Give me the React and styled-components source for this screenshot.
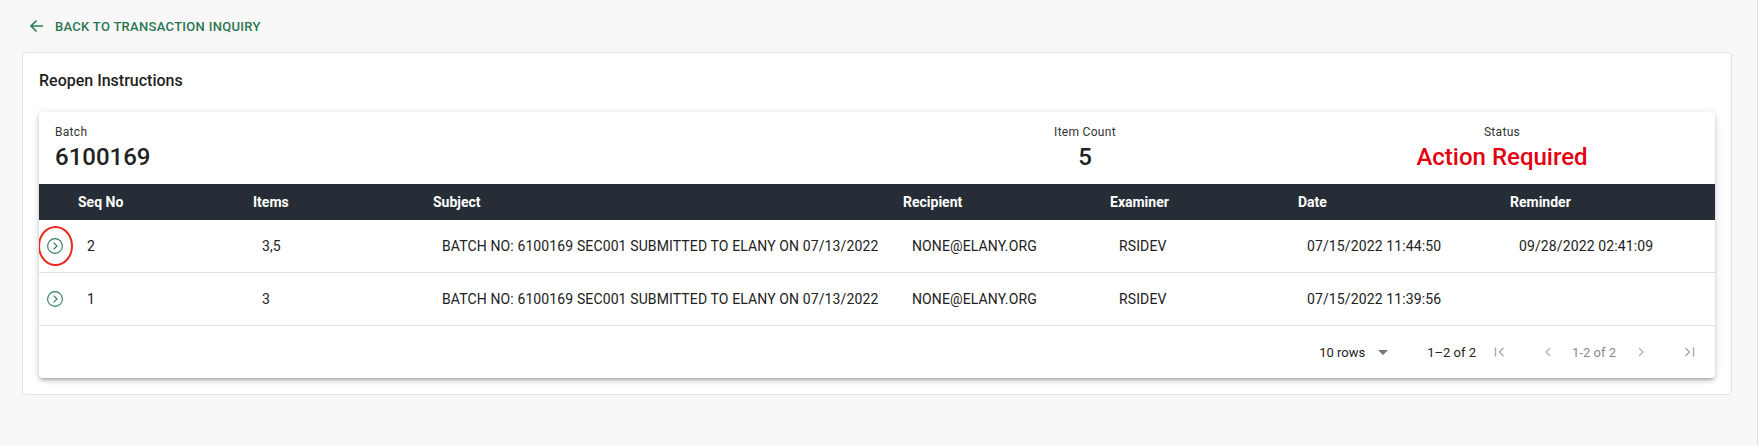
import React from 'react';
import styled, { createGlobalStyle } from 'styled-components';

const COLUMNS = '39px 175px 180px 470px 207px 188px 212px 1fr';

const rows = [
  {
    seq: '2',
    items: '3,5',
    subject: 'BATCH NO: 6100169 SEC001 SUBMITTED TO ELANY ON 07/13/2022',
    recipient: 'NONE@ELANY.ORG',
    examiner: 'RSIDEV',
    date: '07/15/2022 11:44:50',
    reminder: '09/28/2022 02:41:09',
    marked: true,
  },
  {
    seq: '1',
    items: '3',
    subject: 'BATCH NO: 6100169 SEC001 SUBMITTED TO ELANY ON 07/13/2022',
    recipient: 'NONE@ELANY.ORG',
    examiner: 'RSIDEV',
    date: '07/15/2022 11:39:56',
    reminder: '',
  },
];

const headers = ['Seq No', 'Items', 'Subject', 'Recipient', 'Examiner', 'Date', 'Reminder'];

const ArrowBack = () => (
  <svg width="15" height="14" viewBox="0 0 15 14" fill="none">
    <path d="M14 7H2M7.5 1.5L2 7l5.5 5.5" stroke="#2e7d57" strokeWidth="1.7" />
  </svg>
);

const OpenIcon = () => (
  <svg width="18" height="18" viewBox="0 0 18 18" fill="none">
    <circle cx="9" cy="9" r="7.4" stroke="#2e7d57" strokeWidth="1.1" />
    <path d="M7.6 5.6L11 9l-3.4 3.4" stroke="#2e7d57" strokeWidth="1.2" />
  </svg>
);

const PagerIcon = ({ d, color = '#b3b3b3' }) => (
  <svg width="12" height="12" viewBox="0 0 12 12" fill="none">
    <path d={d} stroke={color} strokeWidth="1.4" />
  </svg>
);

const App = () => (
  <>
    <GlobalStyle />
    <Page>
      <BackLink>
        <ArrowBack />
        Back to Transaction Inquiry
      </BackLink>
      <Card>
        <Title>Reopen Instructions</Title>
        <Paper>
          <Summary>
            <SummaryItem>
              <Label>Batch</Label>
              <Value>6100169</Value>
            </SummaryItem>
            <SummaryItem $center>
              <Label>Item Count</Label>
              <Value>5</Value>
            </SummaryItem>
            <SummaryItem $center>
              <Label>Status</Label>
              <Value $alert>Action Required</Value>
            </SummaryItem>
          </Summary>
          <HeadRow>
            <span />
            {headers.map((h) => (
              <HeadCell key={h}>{h}</HeadCell>
            ))}
          </HeadRow>
          {rows.map((r) => (
            <Row key={r.seq}>
              <IconCell>
                <OpenIcon />
                {r.marked && <Marker />}
              </IconCell>
              <Cell>{r.seq}</Cell>
              <Cell>{r.items}</Cell>
              <Cell>{r.subject}</Cell>
              <Cell>{r.recipient}</Cell>
              <Cell>{r.examiner}</Cell>
              <Cell>{r.date}</Cell>
              <Cell>{r.reminder}</Cell>
            </Row>
          ))}
          <Footer>
            <RowsSelect>
              10 rows
              <svg width="10" height="5" viewBox="0 0 10 5">
                <polygon points="0,0 10,0 5,5" fill="#757575" />
              </svg>
            </RowsSelect>
            <Range>1–2 of 2</Range>
            <PagerButton $gap={12}>
              <PagerIcon d="M1.5 1.5v9M9.5 2L5.5 6l4 4" color="#a8a8a8" />
            </PagerButton>
            <PagerButton $gap={24}>
              <PagerIcon d="M8 2L4 6l4 4" />
            </PagerButton>
            <PageText>1-2 of 2</PageText>
            <PagerButton $gap={13}>
              <PagerIcon d="M4 2l4 4-4 4" />
            </PagerButton>
            <PagerButton $gap={24}>
              <PagerIcon d="M2.5 2l4 4-4 4M10.5 1.5v9" color="#a8a8a8" />
            </PagerButton>
          </Footer>
        </Paper>
      </Card>
    </Page>
  </>
);

const GlobalStyle = createGlobalStyle`
  body {
    margin: 0;
    background: #f8f8f8;
    font-family: Roboto, 'Liberation Sans', Arial, sans-serif;
    color: #212121;
  }
`;

const Page = styled.div`
  box-sizing: border-box;
  min-height: 100vh;
  padding: 14px 25px 0 22px;
  border-right: 1px solid #e2e2e2;
`;

const BackLink = styled.div`
  display: flex;
  align-items: center;
  gap: 11px;

  height: 24px;
  padding-left: 7px;
  margin-bottom: 14px;

  color: #2b7652;
  font-size: 13px;
  font-weight: 500;
  letter-spacing: 0.3px;
  text-transform: uppercase;
`;

const Card = styled.div`
  background: #fff;
  border: 1px solid #e3e3e3;
  border-radius: 4px;
  padding: 16px;
`;

const Title = styled.h2`
  margin: 0 0 19px;
  font-size: 16px;
  font-weight: 500;
  line-height: 24px;
  color: #1f1f1f;
`;

const Paper = styled.div`
  background: #fff;
  border-radius: 4px;
  overflow: hidden;
  box-shadow: 0px 3px 3px -2px rgba(0, 0, 0, 0.2), 0px 3px 4px 0px rgba(0, 0, 0, 0.14),
    0px 1px 8px 0px rgba(0, 0, 0, 0.12);
`;

const Summary = styled.div`
  display: grid;
  grid-template-columns: 1fr 440px 394px;
  padding: 12px 16px 13px;
`;

const SummaryItem = styled.div`
  display: flex;
  flex-direction: column;
  align-items: ${(p) => (p.$center ? 'center' : 'flex-start')};
`;

const Label = styled.span`
  font-size: 12px;
  line-height: 16px;
  letter-spacing: 0.3px;
  color: #333;
`;

const Value = styled.span`
  margin-top: 3px;
  font-size: 24px;
  font-weight: 500;
  line-height: 28px;
  color: ${(p) => (p.$alert ? '#e3000f' : '#222')};
`;

const HeadRow = styled.div`
  display: grid;
  grid-template-columns: ${COLUMNS};
  align-items: center;

  height: 36px;
  background: #262d37;
  color: #fff;
`;

const HeadCell = styled.span`
  font-size: 14px;
  font-weight: 700;
`;

const Row = styled.div`
  display: grid;
  grid-template-columns: ${COLUMNS};
  align-items: center;

  height: 52px;
  border-bottom: 1px solid #e0e0e0;
  font-size: 14px;
`;

const IconCell = styled.div`
  position: relative;
  display: flex;
  align-items: center;
  height: 100%;
  padding-left: 7px;
`;

const Marker = styled.span`
  position: absolute;
  left: -1px;
  top: 6px;
  width: 35px;
  height: 40px;
  box-sizing: border-box;
  border: 2px solid #e8291d;
  border-radius: 50%;
`;

const Cell = styled.span`
  padding-left: 9px;
  white-space: nowrap;
  letter-spacing: 0.12px;
`;

const Footer = styled.div`
  display: flex;
  align-items: center;
  justify-content: flex-end;

  height: 52px;
  padding-right: 14px;
  font-size: 13px;
  color: #222;
`;

const RowsSelect = styled.span`
  display: flex;
  align-items: center;
  gap: 13px;
`;

const Range = styled.span`
  margin-left: 39px;
`;

const PagerButton = styled.span`
  display: flex;
  align-items: center;
  justify-content: center;
  width: 24px;
  height: 24px;
  margin-left: ${(p) => p.$gap}px;
`;

const PageText = styled.span`
  margin-left: 12px;
  color: #8a8a8a;
`;

export default App;
